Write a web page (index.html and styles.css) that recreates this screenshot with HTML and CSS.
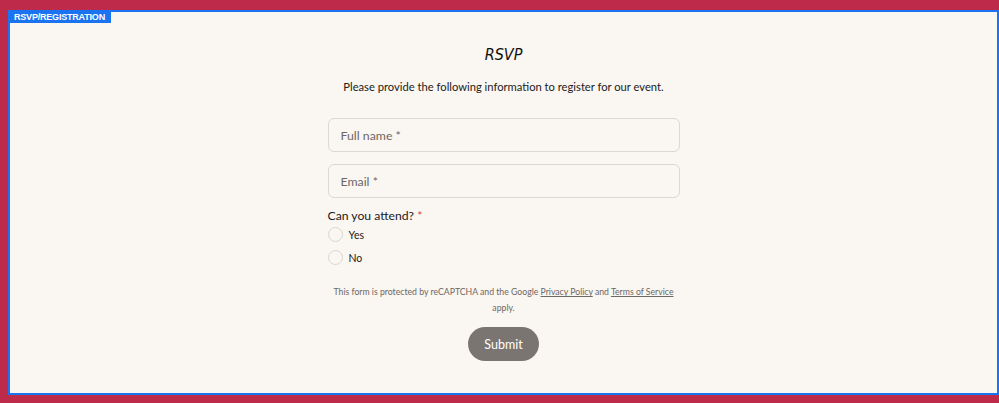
FILE: index.html
```html
<!DOCTYPE html>
<html>
<head>
<meta charset="utf-8">
<link rel="stylesheet" href="styles.css">
</head>
<body>
<div class="frame">
  <div class="tag">RSVP/REGISTRATION</div>
  <div class="form">
    <h1 class="title">RSVP</h1>
    <p class="intro">Please provide the following information to register for our event.</p>
    <div class="field">Full name *</div>
    <div class="field">Email *</div>
    <div class="question">Can you attend? <span class="req">*</span></div>
    <div class="options">
      <div class="option"><span class="radio"></span><span>Yes</span></div>
      <div class="option"><span class="radio"></span><span>No</span></div>
    </div>
    <p class="legal">This form is protected by reCAPTCHA and the Google <a href="#">Privacy Policy</a> and <a href="#">Terms of Service</a> apply.</p>
    <button class="submit">Submit</button>
  </div>
</div>
</body>
</html>
```
FILE: styles.css
```css
html, body { margin: 0; }
body {
  background: #be2a4a;
  padding: 10px 0 8px 8px;
  height: 403px;
  box-sizing: border-box;
  overflow: hidden;
  font-family: Lato, "Noto Sans", sans-serif;
}
.frame {
  position: relative;
  height: 385px;
  box-sizing: border-box;
  border: 2px solid #1a73f0;
  background: #faf6f1;
  display: flex;
  justify-content: center;
}
.tag {
  position: absolute;
  left: -2px;
  top: -2px;
  background: #1a73f0;
  color: #fff;
  font-family: "Liberation Sans", Arial, sans-serif;
  font-weight: bold;
  font-size: 9px;
  letter-spacing: -0.2px;
  padding: 2px 6px 1px 6px;
  line-height: 10px;
}
.form {
  width: 352px;
  display: flex;
  flex-direction: column;
  align-items: stretch;
  padding-top: 30px;
}
.title {
  margin: 0;
  text-align: center;
  font-family: "DejaVu Sans Condensed", "DejaVu Sans", sans-serif;
  font-style: italic;
  font-weight: normal;
  font-size: 16px;
  line-height: 26px;
  color: #111;
}
.intro {
  margin: 10px -40px 0;
  text-align: center;
  font-size: 11.2px;
  line-height: 18px;
  color: #1b1b1b;
}
.field {
  margin-top: 22px;
  height: 34px;
  box-sizing: border-box;
  border: 1px solid #dcd8d3;
  border-radius: 6px;
  padding: 0 12px;
  display: flex;
  align-items: center;
  font-size: 12.3px;
  color: #6d6864;
}
.field + .field { margin-top: 12px; }
.question {
  margin-top: 9px;
  font-size: 12.2px;
  line-height: 18px;
  color: #1b1b1b;
}
.req { color: #e0443a; }
.options {
  display: flex;
  flex-direction: column;
  gap: 8px;
  margin-top: 2px;
}
.option {
  display: flex;
  align-items: center;
  gap: 6px;
  font-size: 10.5px;
  color: #1b1b1b;
}
.radio {
  width: 13px;
  height: 13px;
  border: 1px solid #d9d5d0;
  border-radius: 50%;
  background: #faf6f1;
}
.legal {
  margin: 19px 0 0;
  text-align: center;
  font-size: 8.7px;
  line-height: 16px;
  color: #6d6864;
}
.legal a { color: #6d6864; }
.submit {
  align-self: center;
  margin-top: 11px;
  width: 71px;
  height: 34px;
  border: none;
  border-radius: 17px;
  background: #7b7571;
  color: #fff;
  font-family: inherit;
  font-size: 12.5px;
}
```
